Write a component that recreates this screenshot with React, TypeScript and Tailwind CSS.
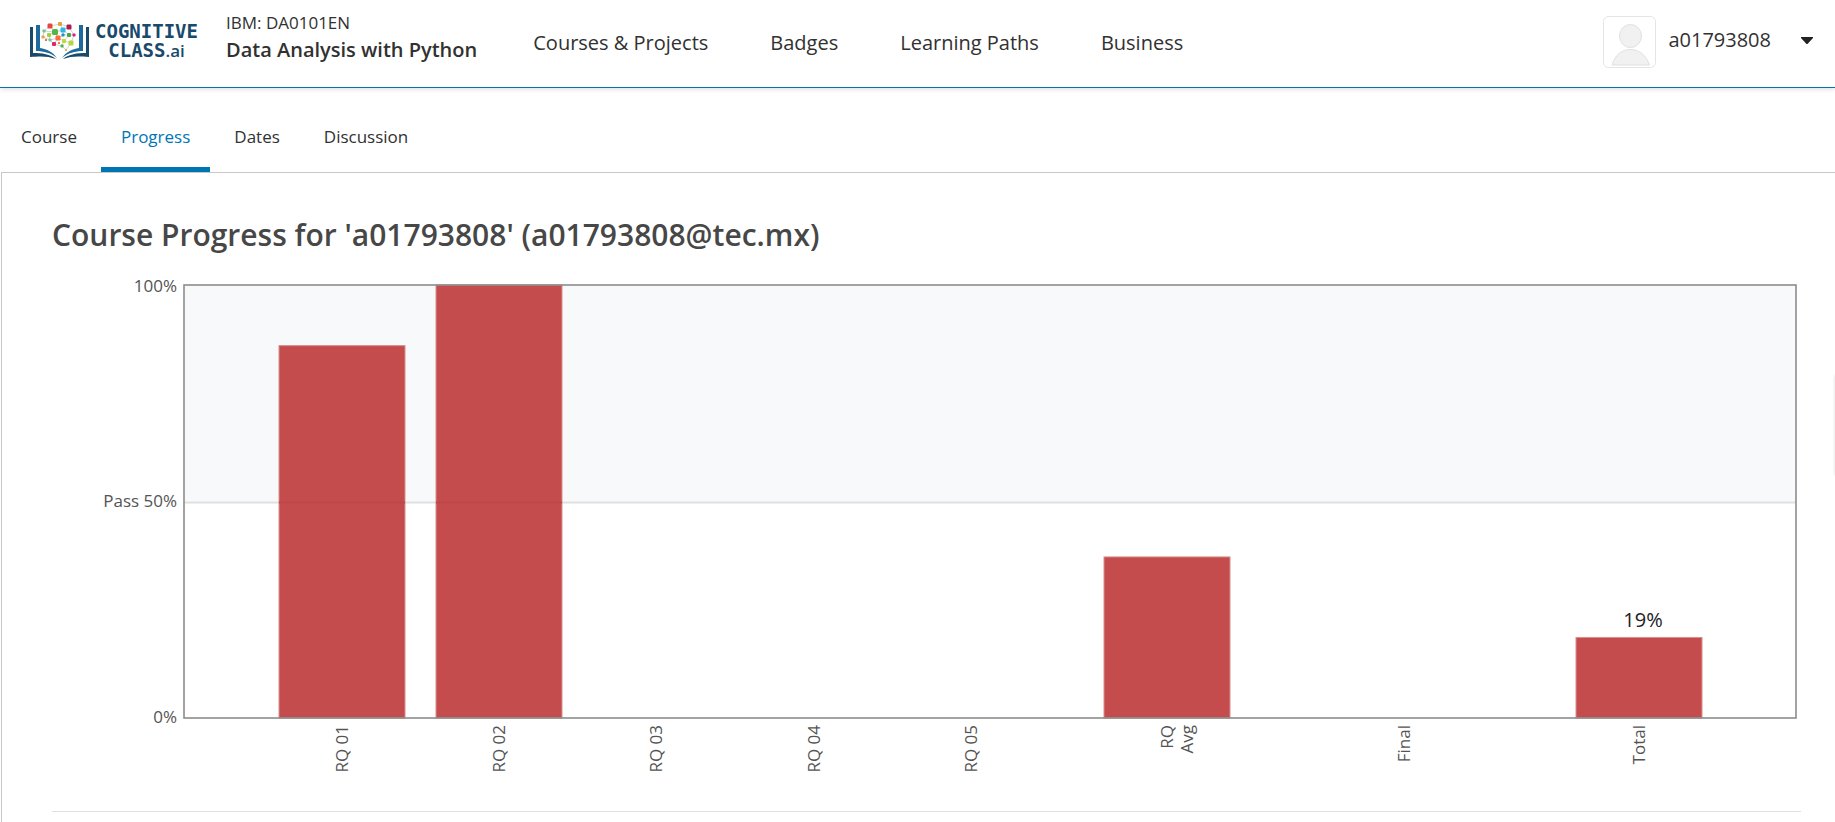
type Bar = { label: string[]; center: number; value: number; caption?: string };

const bars: Bar[] = [
  { label: ["RQ 01"], center: 290, value: 86 },
  { label: ["RQ 02"], center: 447, value: 100 },
  { label: ["RQ 03"], center: 604, value: 0 },
  { label: ["RQ 04"], center: 762, value: 0 },
  { label: ["RQ 05"], center: 919, value: 0 },
  { label: ["RQ", "Avg"], center: 1115, value: 37.2 },
  { label: ["Final"], center: 1352, value: 0 },
  { label: ["Total"], center: 1587, value: 18.6, caption: "19%" },
];

const plot = { left: 132, right: 1744, top: 11, bottom: 444 };
const plotWidth = plot.right - plot.left;
const plotHeight = plot.bottom - plot.top;
const barWidth = 126;
const passY = plot.top + plotHeight / 2;

function LogoMark() {
  const dots: [number, number, number, string][] = [
    [20, 4, 5, "#e8453c"],
    [30, 2, 4, "#e0a43c"],
    [39, 5, 5, "#b01c50"],
    [33, 8, 5, "#28b8e0"],
    [25, 10, 6, "#4fb848"],
    [14, 9, 3, "#6cc49a"],
    [13, 15, 3, "#f0a040"],
    [19, 13, 4, "#a8d040"],
    [33, 13, 3, "#2090c8"],
    [39, 13, 4, "#48a848"],
    [44, 13, 3, "#e0207c"],
    [28, 16, 5, "#ff6a38"],
    [16, 18, 2, "#e06850"],
    [20, 18, 3, "#78c8a0"],
    [34, 19, 4, "#c0d838"],
    [24, 22, 4, "#e82070"],
    [29, 21, 2, "#f07838"],
    [41, 21, 5, "#b4d838"],
    [32, 24, 3, "#58b048"],
    [36, 28, 2, "#f0a838"],
  ];
  return (
    <svg width="59" height="37" viewBox="0 0 59 37" className="shrink-0" aria-hidden="true">
      <path d="M0 5h3v26c9 0 17 1 23 6-8-3-15-3-26-2z M59 5h-3v26c-9 0-17 1-23 6 8-3 15-3 26-2z" fill="#184a6c" />
      <path d="M6 3h4v23c7 1 13 4 17 10-6-5-13-7-21-7z M53 3h-4v23c-7 1-13 4-17 10 6-5 13-7 21-7z" fill="#1d6a9e" />
      <path
        d="M14 9l6-5 10-2 9 3 5 8-3 8-5 7-4-4-8-2-4-4-7-3 1-6 11 1 8-2 6-3M20 4l5 6-6 3 1 5 8-2 5-3 6 0 5 0M25 10l3 6 6 3 7 2M30 2l3 6 0 5-5 3-4 6M33 8l6 5-5 6-2 5"
        fill="none"
        stroke="#b9bfc2"
        strokeWidth=".7"
      />
      {dots.map(([x, y, s, fill]) => (
        <rect key={`${x}-${y}`} x={x - s / 2} y={y - s / 2} width={s} height={s} rx={s / 4} fill={fill} />
      ))}
    </svg>
  );
}

function Header() {
  const links = ["Courses & Projects", "Badges", "Learning Paths", "Business"];
  return (
    <header className="flex h-[88px] items-start border-b border-[#0075b4] bg-white pr-4 pl-[30px] shadow-[0_1px_5px_rgba(0,0,0,0.15)]">
      <a href="#home" aria-label="Cognitive Class" className="flex shrink-0 items-start pt-[22px] text-[#184a6c]">
        <LogoMark />
        <span className="ml-1.5 block w-[103px] text-center font-['DejaVu_Sans_Mono',monospace] text-[19px] leading-[19px] font-bold whitespace-nowrap">
          COGNITIVE
          <br />
          CLASS<span className="font-['Open_Sans',sans-serif] text-[17px] leading-none font-semibold">.ai</span>
        </span>
      </a>
      <h2 className="ml-7 shrink-0 pt-[9px] text-[17px] leading-[27px]">
        <span className="block font-normal">IBM: DA0101EN</span>
        <span className="block text-[20px] font-semibold">Data Analysis with Python</span>
      </h2>
      <nav aria-label="Main" className="ml-14 flex gap-[62px] pt-[29px] text-[20px] leading-7">
        {links.map((name) => (
          <a key={name} href="#main" className="whitespace-nowrap">
            {name}
          </a>
        ))}
      </nav>
      <div className="ml-auto flex shrink-0 items-start pt-4">
        <svg width="53" height="52" viewBox="0 0 53 52" aria-hidden="true">
          <rect x=".5" y=".5" width="52" height="51" rx="5" fill="#fff" stroke="#e4e4e4" />
          <ellipse cx="27.5" cy="20" rx="11" ry="11.5" fill="#f1f1f1" stroke="#e0e0e0" />
          <path d="M9 49C12 39 19 33.500 27.500 33.500S43 39 46.500 49z" fill="#f1f1f1" stroke="#e0e0e0" />
        </svg>
        <a href="#dashboard" className="ml-3 pt-2.5 text-[20px] leading-7">
          a01793808
        </a>
        <button type="button" aria-label="More options" className="ml-6 flex h-12 w-6 items-center justify-center">
          <svg width="12" height="7" viewBox="0 0 12 7" aria-hidden="true">
            <path d="M0 0h12v1L6.500 7h-1L0 1z" fill="#222" />
          </svg>
        </button>
      </div>
    </header>
  );
}

function Tabs() {
  const tabs = ["Course", "Progress", "Dates", "Discussion"];
  const base = "border-b-[5px] px-5 pt-[37px] pb-[18px] text-[17px] leading-6";
  return (
    <nav aria-label="Course material" className="flex gap-1">
      {tabs.map((tab) =>
        tab === "Progress" ? (
          <a key={tab} href="#progress" aria-current="page" className={`${base} border-[#0075b4] text-[#0075b4]`}>
            {tab}
          </a>
        ) : (
          <a key={tab} href="#tab" className={`${base} border-transparent`}>
            {tab}
          </a>
        ),
      )}
    </nav>
  );
}

function ProgressChart() {
  return (
    <svg viewBox="0 0 1749 510" className="block h-auto w-full" role="img" aria-label="Grade chart">
      <rect x={plot.left} y={plot.top} width={plotWidth} height={plotHeight / 2} fill="#f7f9fb" />
      <line x1={plot.left} x2={plot.right} y1={passY + 1} y2={passY + 1} stroke="#e0e0e0" strokeWidth="2" />
      {bars
        .filter((bar) => bar.value > 0)
        .map((bar) => {
          const height = (plotHeight * bar.value) / 100;
          return (
            <g key={bar.label.join(" ")}>
              <rect
                x={bar.center - barWidth / 2}
                y={plot.bottom - height}
                width={barWidth}
                height={height}
                fill="#c44c4c"
                stroke="#d98f8f"
              />
              {bar.value > 50 && (
                <rect x={bar.center - barWidth / 2} y={passY} width={barWidth} height="2" fill="#be4646" />
              )}
            </g>
          );
        })}
      <rect
        x={plot.left}
        y={plot.top}
        width={plotWidth}
        height={plotHeight}
        fill="none"
        stroke="#8c8c8c"
        strokeWidth="1.6"
      />
      <g fontSize="17" fill="#545454" textAnchor="end">
        <text x="125" y="18">100%</text>
        <text x="125" y="233">Pass 50%</text>
        <text x="125" y="449">0%</text>
        {bars.map((bar) =>
          bar.label.map((line, i) => (
            <text
              key={bar.label.join(" ") + line}
              transform={`translate(${bar.center + 6 + i * 20} 451) rotate(-90)`}
            >
              {line}
            </text>
          )),
        )}
      </g>
      {bars
        .filter((bar) => bar.caption)
        .map((bar) => (
          <text
            key={bar.caption}
            x={bar.center + 4}
            y={plot.bottom - (plotHeight * bar.value) / 100 - 10}
            fontSize="20"
            fill="#222"
            textAnchor="middle"
          >
            {bar.caption}
          </text>
        ))}
    </svg>
  );
}

export default function App() {
  return (
    <div className="relative min-h-screen overflow-hidden bg-white font-['Open_Sans',sans-serif] text-[#313131]">
      <Header />
      <div className="pl-px">
        <Tabs />
        <main className="min-h-[650px] border-t border-l border-[#c8c8c8] pt-[42px] pr-[34px] pl-[50px]">
          <section className="border-b border-[#e0e0e0] pb-[27px]">
            <h1 className="mb-[19px] text-[30px] leading-10 font-semibold text-[#474747]">
              Course Progress for 'a01793808' (a01793808@tec.mx)
            </h1>
            <ProgressChart />
          </section>
        </main>
      </div>
      <div className="absolute top-[375px] left-full h-[100px] w-4 shadow-[0_0_3px_rgba(0,0,0,0.15)]" />
    </div>
  );
}
